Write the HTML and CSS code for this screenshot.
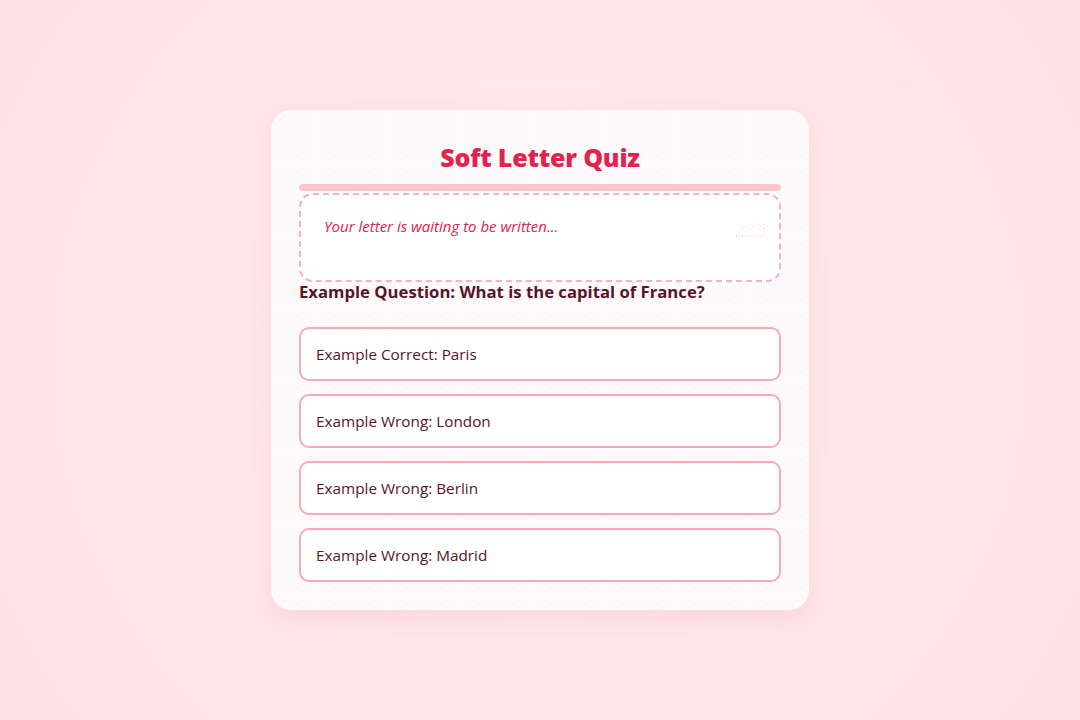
FILE: index.html
```html
<!DOCTYPE html>
<html lang="en">
<head>
  <meta charset="UTF-8" />
  <meta name="viewport" content="width=device-width, initial-scale=1.0" />
  <title>Soft Letter Quiz</title>
  <link rel="stylesheet" href="styles.css">
</head>
<body>
  <main class="quiz-card">
    <h1 class="quiz-title">Soft Letter Quiz</h1>
    <div class="progress"><span class="progress-fill"></span></div>

    <!-- letter -->
    <div class="letter">
      <p class="letter-text">Your letter is waiting to be written...</p>
      <svg class="letter-icon" viewBox="0 0 30 20" width="30" height="20" fill="none" stroke="#f7c3cc" stroke-width="1" stroke-dasharray="1 2">
        <path d="M1 19 H29 V6"/>
        <path d="M1 19 L9 9 L14 13 L22 5 L29 12"/>
      </svg>
    </div>

    <h2 class="question">Example Question: What is the capital of France?</h2>

    <div class="options">
      <button class="option">Example Correct: Paris</button>
      <button class="option">Example Wrong: London</button>
      <button class="option">Example Wrong: Berlin</button>
      <button class="option">Example Wrong: Madrid</button>
    </div>
  </main>
</body>
</html>
```

FILE: styles.css
```css
/* ===== base ===== */
*,*::before,*::after{box-sizing:border-box;margin:0;padding:0;}
html,body{height:100%;}
body{
  font-family:"Open Sans","Noto Sans",sans-serif;
  color:#5a1428;
  background:radial-gradient(circle at 50% 50%,#fff1f3 0%,#ffe8ec 45%,#ffdfe4 100%);
  display:flex;align-items:center;justify-content:center;
}

/* ===== card ===== */
.quiz-card{
  width:538px;height:500px;
  padding:31px 28px 28px;
  border-radius:20px;
  background-color:#fdfafb;
  background-image:
    radial-gradient(circle,#fae3e8 0.7px,transparent 1px),
    radial-gradient(circle,#fae3e8 0.7px,transparent 1px);
  background-size:9px 9px;
  background-position:0 0,4.5px 4.5px;
  box-shadow:0 8px 28px rgba(240,150,170,.25);
}
.quiz-title{
  text-align:center;
  font-size:25px;font-weight:800;
  color:#e3224f;
  line-height:1.3;
  letter-spacing:-.2px;
}
.progress{height:7px;margin-top:10px;border-radius:4px;background:#fcc6cf;}
.progress-fill{display:block;width:0;height:100%;}

/* ===== letter ===== */
.letter{
  position:relative;
  height:89px;
  margin-top:2px;
  padding:21px 23px;
  background:#fff;
  border:2px dashed #f8b2bf;
  border-radius:14px;
}
.letter-text{font-style:italic;font-size:15px;color:#e3224f;}
.letter-icon{position:absolute;top:22px;right:14px;}

/* ===== question ===== */
.question{
  margin-top:-2px;
  font-size:16.7px;font-weight:700;
  color:#5a1428;
}

/* ===== options ===== */
.options{display:flex;flex-direction:column;gap:13px;margin-top:24px;}
.option{
  height:54px;
  padding:0 15px;
  text-align:left;
  font-family:inherit;font-size:15.3px;
  color:#5a1428;
  background:#fff;
  border:2px solid #f9a9b6;
  border-radius:10px;
  cursor:pointer;
}
```
